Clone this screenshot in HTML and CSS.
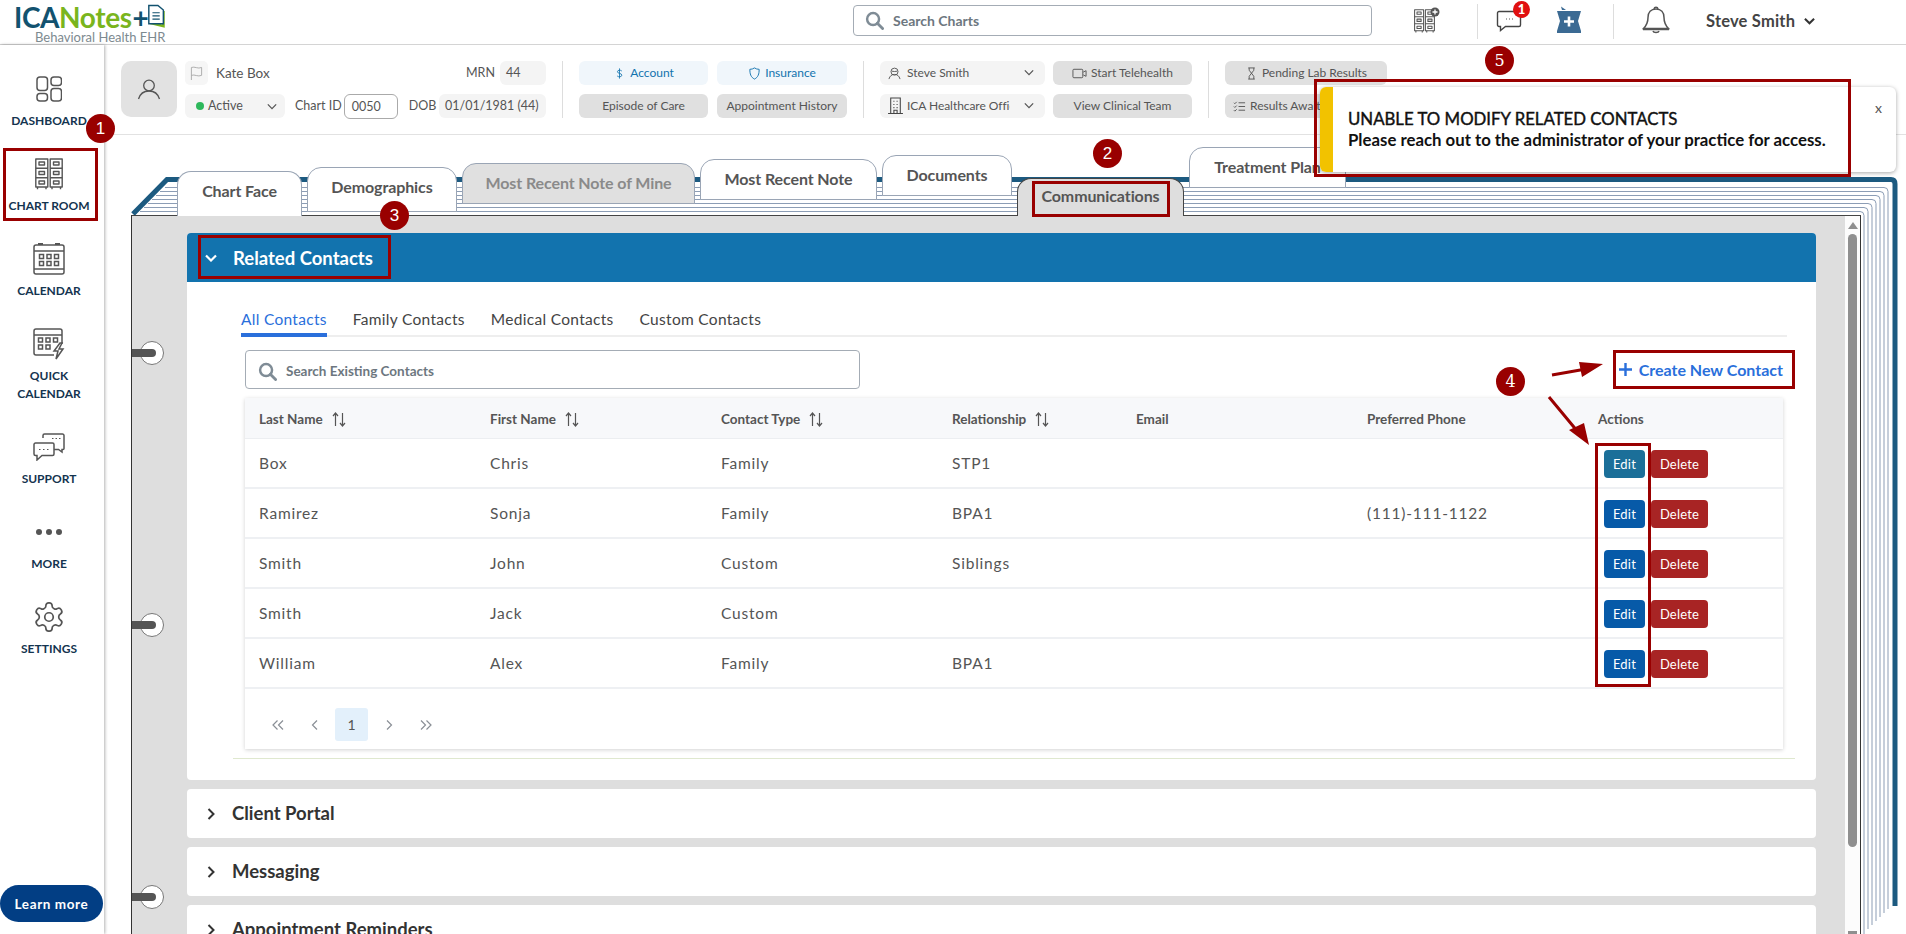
FILE: index.html
```html
<!DOCTYPE html>
<html lang="en">
<head>
<meta charset="utf-8">
<title>ICANotes - Related Contacts</title>
<link rel="stylesheet" href="styles.css">
</head>
<body>
<svg class="defs" width="0" height="0" aria-hidden="true">
  <symbol id="i-cabinets" viewBox="0 0 28 32">
    <g fill="none" stroke="currentColor" stroke-width="1.400" stroke-linejoin="round">
      <path d="M.8 1h12v28h-12zM15.200 1h12v28h-12z"/>
      <path d="M.8 10.300h12M.8 19.700h12M15.200 10.300h12M15.200 19.700h12M2.500 29v2.200M11 29v2.200M17 29v2.200M25.500 29v2.200"/>
      <path d="M4 4h5.500v3H4zM18.500 4H24v3h-5.500zM4 13.500h5.500v3H4zM18.500 13.500H24v3h-5.500zM4 23h5.500v3H4zM18.500 23H24v3h-5.500z"/>
    </g>
  </symbol>
  <symbol id="i-search" viewBox="0 0 20 20">
    <circle cx="8.500" cy="8.500" r="6.300" fill="none" stroke="currentColor" stroke-width="2.600"/>
    <path d="M13 13l5.500 5.500" stroke="currentColor" stroke-width="3" stroke-linecap="round"/>
  </symbol>
  <symbol id="i-chev-down" viewBox="0 0 12 8">
    <path d="M1 1.500l5 5 5-5" fill="none" stroke="currentColor"/>
  </symbol>
  <symbol id="i-chev-right" viewBox="0 0 8 12">
    <path d="M1.500 1l5 5-5 5" fill="none" stroke="currentColor" stroke-width="2"/>
  </symbol>
  <symbol id="i-sort" viewBox="0 0 14 15">
    <path d="M3.500 14V1M1 4l2.500-3L6 4M10.500 1v13M8 11l2.500 3 2.500-3" fill="none" stroke="currentColor" stroke-width="1.200"/>
  </symbol>
  <symbol id="i-first" viewBox="0 0 12 12"><path d="M5.500 1.500L1 6l4.500 4.500M11 1.500L6.500 6l4.500 4.500" fill="none" stroke="currentColor" stroke-width="1.200"/></symbol>
  <symbol id="i-prev" viewBox="0 0 12 12"><path d="M8 1.500L3.500 6 8 10.500" fill="none" stroke="currentColor" stroke-width="1.200"/></symbol>
  <symbol id="i-next" viewBox="0 0 12 12"><path d="M4 1.500L8.500 6 4 10.500" fill="none" stroke="currentColor" stroke-width="1.200"/></symbol>
  <symbol id="i-last" viewBox="0 0 12 12"><path d="M1 1.500L5.500 6 1 10.500M6.500 1.500L11 6l-4.500 4.500" fill="none" stroke="currentColor" stroke-width="1.200"/></symbol>
</svg>

<div class="app">
  <header class="topbar">
    <div class="logo">
      <div class="logo-mark"><span class="logo-ica">ICA</span><span class="logo-notes">Notes</span><span class="logo-plus">+</span>
        <svg class="logo-doc" viewBox="0 0 22 26"><path d="M3 21l15 3.500V8" fill="none" stroke="#7ab51d" stroke-width="3"/><path d="M2 2h10l6 5v15H2z" fill="#fff" stroke="#12526f" stroke-width="1.600"/><path d="M6 10h8M6 13.500h8M6 17h8" stroke="#12526f" stroke-width="1.300"/></svg>
      </div>
      <div class="logo-sub">Behavioral Health EHR</div>
    </div>
    <div class="chart-search">
      <svg class="search-icon"><use href="#i-search"/></svg>
      <span>Search Charts</span>
    </div>
    <svg class="top-cabinets" viewBox="0 0 26 26">
      <use href="#i-cabinets" x="0" y="2" width="21" height="24"/>
      <circle cx="21" cy="5" r="4.500" fill="#555"/><path d="M21 2.500v5M18.500 5h5" stroke="#fff" stroke-width="1.300"/>
    </svg>
    <span class="top-divider first"></span>
    <div class="message-icon">
      <svg viewBox="0 0 26 22"><path d="M3 1.500h20a1.500 1.500 0 0 1 1.500 1.500v12a1.500 1.500 0 0 1-1.500 1.500H9.500L4.500 20.500v-4H3A1.500 1.500 0 0 1 1.500 15V3A1.500 1.500 0 0 1 3 1.500z" fill="#fff" stroke="#444" stroke-width="1.400"/><path d="M10 9h1M13 9h1M16 9h1" stroke="#555" stroke-width="1"/></svg>
      <span class="badge">1</span>
    </div>
    <svg class="mortar-icon" viewBox="0 0 26 28"><path d="M5 0.500l5 3.500h-4z" fill="#3b6a93"/><path d="M1 5h24l-3 10 3 10v2H1v-2l3-10z" fill="#3b6a93"/><path d="M13 10.500v10M8 15.500h10" stroke="#fff" stroke-width="2.600"/></svg>
    <span class="top-divider second"></span>
    <svg class="bell-icon" viewBox="0 0 28 28"><path d="M14 3c-5 0-8 3.500-8 8.500 0 5-1.500 8-4.500 11h25c-3-3-4.500-6-4.500-11C22 6.500 19 3 14 3z" fill="none" stroke="#555" stroke-width="1.500"/><path d="M11 25c.5 2 5.500 2 6 0M12 3c.5-2.500 3.500-2.500 4 0" fill="none" stroke="#555" stroke-width="1.500"/><path d="M1 23.500h26" stroke="#555" stroke-width="1.500"/></svg>
    <span class="user-name">Steve Smith</span>
    <svg class="user-chev"><use href="#i-chev-down"/></svg>
  </header>

  <div class="workspace">
    <nav class="sidebar">
      <a class="nav-item">
        <span class="nav-icon"><svg class="ico-dash" viewBox="0 0 26 26"><g fill="none" stroke="#555" stroke-width="1.500"><rect x="1" y="1" width="10.500" height="13.500" rx="3"/><rect x="15" y="1" width="10.500" height="8.500" rx="3"/><rect x="1" y="17.500" width="10.500" height="7.500" rx="3"/><rect x="15" y="12.500" width="10.500" height="12.500" rx="3"/></g></svg></span>
        <span class="nav-label">DASHBOARD</span>
      </a>
      <a class="nav-item">
        <span class="nav-icon"><svg class="ico-chart"><use href="#i-cabinets"/></svg></span>
        <span class="nav-label">CHART ROOM</span>
      </a>
      <a class="nav-item">
        <span class="nav-icon"><svg class="ico-cal" viewBox="0 0 32 32"><g fill="none" stroke="#555" stroke-width="1.500"><rect x="1" y="2" width="30" height="29" rx="2"/><path d="M1 8h30M1 26h30"/><path d="M5 1h5M22 1h5" stroke-width="2"/><rect x="6.500" y="11.500" width="4" height="4"/><rect x="14" y="11.500" width="4" height="4"/><rect x="21.500" y="11.500" width="4" height="4"/><rect x="6.500" y="18.500" width="4" height="4"/><rect x="14" y="18.500" width="4" height="4"/><rect x="21.500" y="18.500" width="4" height="4"/></g></svg></span>
        <span class="nav-label">CALENDAR</span>
      </a>
      <a class="nav-item tall">
        <span class="nav-icon"><svg class="ico-quick" viewBox="0 0 32 32"><g fill="none" stroke="#555" stroke-width="1.500"><path d="M21 27H3a2 2 0 0 1-2-2V3a2 2 0 0 1 2-2h24a2 2 0 0 1 2 2v13"/><path d="M1 7h28"/><rect x="5.500" y="10" width="4" height="4"/><rect x="13" y="10" width="4" height="4"/><rect x="20.500" y="10" width="4" height="4"/><rect x="5.500" y="17" width="4" height="4"/><rect x="13" y="17" width="4" height="4"/><path d="M27 15l-6 8h4l-2 8 7-10h-4l3-6z" fill="#fff"/></g></svg></span>
        <span class="nav-label">QUICK<br>CALENDAR</span>
      </a>
      <a class="nav-item">
        <span class="nav-icon"><svg class="ico-support" viewBox="0 0 32 28"><g fill="none" stroke="#555" stroke-width="1.500"><path d="M10 5V2.500A1.500 1.500 0 0 1 11.500 1h18A1.500 1.500 0 0 1 31 2.500v13a1 1 0 0 1-1 1l-1 0v2.500l-3.500-2.500H21"/><path d="M2.500 10H19.500A1.500 1.500 0 0 1 21 11.500V21a1.500 1.500 0 0 1-1.500 1.500H9L4 27v-4.500H2.500A1.500 1.500 0 0 1 1 21V11.500A1.500 1.500 0 0 1 2.500 10z" fill="#fff"/><path d="M6 16.500h1.500M10 16.500h1.500M14 16.500h1.500M19 5.500h1.500M22.500 5.500h1.500M26 5.500h1.500" stroke-width="1"/></g></svg></span>
        <span class="nav-label">SUPPORT</span>
      </a>
      <a class="nav-item">
        <span class="nav-icon"><span class="dots"><i></i><i></i><i></i></span></span>
        <span class="nav-label">MORE</span>
      </a>
      <a class="nav-item">
        <span class="nav-icon"><svg class="ico-gear" viewBox="0 0 24 24"><path fill="none" stroke="#555" stroke-width="1.200" d="M12.220 2h-.44a2 2 0 0 0-2 2v.18a2 2 0 0 1-1 1.730l-.43.25a2 2 0 0 1-2 0l-.15-.08a2 2 0 0 0-2.730.73l-.22.38a2 2 0 0 0 .73 2.730l.15.1a2 2 0 0 1 1 1.720v.51a2 2 0 0 1-1 1.740l-.15.09a2 2 0 0 0-.73 2.730l.22.38a2 2 0 0 0 2.730.73l.15-.08a2 2 0 0 1 2 0l.43.25a2 2 0 0 1 1 1.730V20a2 2 0 0 0 2 2h.44a2 2 0 0 0 2-2v-.18a2 2 0 0 1 1-1.730l.43-.25a2 2 0 0 1 2 0l.15.08a2 2 0 0 0 2.730-.73l.22-.39a2 2 0 0 0-.73-2.730l-.15-.08a2 2 0 0 1-1-1.740v-.5a2 2 0 0 1 1-1.740l.15-.09a2 2 0 0 0 .73-2.730l-.22-.38a2 2 0 0 0-2.730-.73l-.15.08a2 2 0 0 1-2 0l-.43-.25a2 2 0 0 1-1-1.730V4a2 2 0 0 0-2-2z"/><circle cx="12" cy="12" r="3" fill="none" stroke="#555" stroke-width="1.200"/></svg></span>
        <span class="nav-label">SETTINGS</span>
      </a>
      <button class="learn-more">Learn more</button>
    </nav>

    <main class="main">
      <section class="patient">
        <div class="avatar"><svg viewBox="0 0 24 24"><circle cx="12" cy="8.500" r="5.300" fill="none" stroke="#555" stroke-width="1.300"/><path d="M1.500 22c1.500-5 5-8 10.500-8s9 3 10.500 8" fill="none" stroke="#555" stroke-width="1.300"/></svg></div>
        <div class="identity">
          <div class="id-row">
            <div class="id-left">
              <span class="flag-box"><svg viewBox="0 0 14 16"><path d="M1.500 15V1.500c3.500-1.500 7 2 11 0V10c-4 2-7.500-1.500-11 0" fill="none" stroke="#aaa" stroke-width="1"/></svg></span>
              <span class="patient-name">Kate Box</span>
            </div>
            <div class="id-right">
              <span class="id-caption">MRN</span>
              <span class="pill-value mrn">44</span>
            </div>
          </div>
          <div class="id-row">
            <span class="status-select"><i class="status-dot"></i><span class="status-text">Active</span><svg class="chev-small"><use href="#i-chev-down"/></svg></span>
            <span class="id-caption chart-cap">Chart ID</span>
            <span class="chart-id">0050</span>
            <span class="id-caption dob-cap">DOB</span>
            <span class="pill-value dob">01/01/1981 (44)</span>
          </div>
        </div>
        <span class="pat-divider"></span>
        <div class="btn-grid account-grid">
          <a class="pbtn light"><svg class="pico" viewBox="0 0 12 14"><path d="M8.500 4.300C6.800 2.800 3.700 3.300 3.800 5.200 3.900 7.400 8.500 6.400 8.500 8.800c0 1.900-3.300 2.300-5 .9M6 1.500v11" fill="none" stroke="#1273ae" stroke-width=".9"/></svg>Account</a>
          <a class="pbtn light"><svg class="pico" viewBox="0 0 12 14"><path d="M1 2.500c2 0 3.500-.5 5-1.500 1.500 1 3 1.500 5 1.500 0 5-1 8.500-5 10.500C2 11 1 7.500 1 2.500z" fill="none" stroke="#1273ae" stroke-width="1"/></svg>Insurance</a>
          <a class="pbtn">Episode of Care</a>
          <a class="pbtn">Appointment History</a>
        </div>
        <span class="pat-divider"></span>
        <div class="btn-grid staff-grid">
          <span class="staff-select"><svg class="pico" viewBox="0 0 14 14"><circle cx="7" cy="5" r="3.800" fill="none" stroke="#555" stroke-width="1"/><path d="M1 13c1-3.500 3-5 6-5s5 1.500 6 5M4 4.500c2 .5 4 .5 6 0" fill="none" stroke="#555" stroke-width="1"/></svg><span class="staff-text">Steve Smith</span><svg class="chev-small"><use href="#i-chev-down"/></svg></span>
          <a class="pbtn"><svg class="pico video" viewBox="0 0 16 12"><rect x="1" y="1.500" width="10.500" height="9" rx="1" fill="none" stroke="#555" stroke-width="1"/><path d="M12 4.500l3-1.500v6l-3-1.500" fill="none" stroke="#555" stroke-width="1"/></svg>Start Telehealth</a>
          <span class="staff-select"><svg class="pico building" viewBox="0 0 14 16"><path d="M2.500 15V1h9v14M0 15.500h14M5 4h1M8 4h1M5 7h1M8 7h1M5 10h1M8 10h1M5.500 15v-2.500h3V15" fill="none" stroke="#444" stroke-width="1"/></svg><span class="staff-text tight">ICA Healthcare Office</span><svg class="chev-small"><use href="#i-chev-down"/></svg></span>
          <a class="pbtn">View Clinical Team</a>
        </div>
        <span class="pat-divider"></span>
        <div class="btn-grid results-grid">
          <a class="pbtn"><svg class="pico" viewBox="0 0 10 14"><path d="M1.500 1h7M1.500 13h7M2.500 1v2.500L7.500 10v3M7.500 1v2.500L2.500 10v3" fill="none" stroke="#555" stroke-width="1"/></svg>Pending Lab Results</a>
          <a class="pbtn left"><svg class="pico" viewBox="0 0 14 12"><path d="M1 2l1 1 2-2M1 6l1 1 2-2M1 10l1 1 2-2M6 2h7M6 6h7M6 10h7" fill="none" stroke="#555" stroke-width="1"/></svg>Results Awaiting</a>
        </div>
      </section>

      <section class="book">
        <svg class="book-pages" viewBox="131 135 1775 799" aria-hidden="true">
          <g fill="none" stroke="#8c9db5" stroke-width="1">
            <path d="M165 187.500H1884q4 0 4 4V909"/>
            <path d="M160 191.500H1880q4 0 4 4V913"/>
            <path d="M156 195.500H1876q4 0 4 4V917"/>
            <path d="M152 199.500H1872q4 0 4 4V921"/>
            <path d="M148 203.500H1868q4 0 4 4V925"/>
            <path d="M144 207.500H1864q4 0 4 4V929"/>
            <path d="M140 211.500H1860q4 0 4 4V934"/>
          </g>
          <path d="M133 214L167 179.500H1891Q1895 179.500 1895 184V906" fill="none" stroke="#1c5a80" stroke-width="5"/>
        </svg>
        <div class="tabs">
          <a class="tab t-face">Chart Face</a>
          <a class="tab t-demo">Demographics</a>
          <a class="tab t-mine">Most Recent Note of Mine</a>
          <a class="tab t-recent">Most Recent Note</a>
          <a class="tab t-docs">Documents</a>
          <a class="tab t-comm">Communications</a>
          <a class="tab t-plan">Treatment Plan</a>
        </div>
        <div class="frame">
          <div class="frame-content">
            <article class="panel open">
              <header class="panel-head"><svg class="head-chev"><use href="#i-chev-down"/></svg><h2>Related Contacts</h2></header>
              <div class="panel-body">
                <div class="subtabs">
                  <a class="subtab active">All Contacts</a>
                  <a class="subtab">Family Contacts</a>
                  <a class="subtab">Medical Contacts</a>
                  <a class="subtab">Custom Contacts</a>
                </div>
                <div class="toolbar">
                  <div class="contact-search"><svg class="search-icon"><use href="#i-search"/></svg><span>Search Existing Contacts</span></div>
                  <a class="create-link"><svg class="plus" viewBox="0 0 14 14"><path d="M7 0v14M0 7h14" stroke="currentColor" stroke-width="2.600"/></svg>Create New Contact</a>
                </div>
                <div class="table-card">
                  <table>
                    <thead>
                      <tr>
                        <th>Last Name<svg class="sort"><use href="#i-sort"/></svg></th>
                        <th>First Name<svg class="sort"><use href="#i-sort"/></svg></th>
                        <th>Contact Type<svg class="sort"><use href="#i-sort"/></svg></th>
                        <th>Relationship<svg class="sort"><use href="#i-sort"/></svg></th>
                        <th>Email</th>
                        <th>Preferred Phone</th>
                        <th>Actions</th>
                      </tr>
                    </thead>
                    <tbody>
                      <tr><td>Box</td><td>Chris</td><td>Family</td><td>STP1</td><td></td><td></td><td><div class="actions"><a class="btn edit hover">Edit</a><a class="btn del">Delete</a></div></td></tr>
                      <tr><td>Ramirez</td><td>Sonja</td><td>Family</td><td>BPA1</td><td></td><td>(111)-111-1122</td><td><div class="actions"><a class="btn edit">Edit</a><a class="btn del">Delete</a></div></td></tr>
                      <tr><td>Smith</td><td>John</td><td>Custom</td><td>Siblings</td><td></td><td></td><td><div class="actions"><a class="btn edit">Edit</a><a class="btn del">Delete</a></div></td></tr>
                      <tr><td>Smith</td><td>Jack</td><td>Custom</td><td></td><td></td><td></td><td><div class="actions"><a class="btn edit">Edit</a><a class="btn del">Delete</a></div></td></tr>
                      <tr><td>William</td><td>Alex</td><td>Family</td><td>BPA1</td><td></td><td></td><td><div class="actions"><a class="btn edit">Edit</a><a class="btn del">Delete</a></div></td></tr>
                    </tbody>
                  </table>
                  <div class="pager">
                    <span class="pg"><svg><use href="#i-first"/></svg></span><span class="pg"><svg><use href="#i-prev"/></svg></span><span class="pg current">1</span><span class="pg"><svg><use href="#i-next"/></svg></span><span class="pg"><svg><use href="#i-last"/></svg></span>
                  </div>
                </div>
                <div class="rule"></div>
              </div>
            </article>
            <article class="panel closed"><svg class="closed-chev"><use href="#i-chev-right"/></svg><h3>Client Portal</h3></article>
            <article class="panel closed"><svg class="closed-chev"><use href="#i-chev-right"/></svg><h3>Messaging</h3></article>
            <article class="panel closed"><svg class="closed-chev"><use href="#i-chev-right"/></svg><h3>Appointment Reminders</h3></article>
          </div>
          <div class="gutter"><i class="sb-up"></i><i class="sb-thumb"></i><i class="sb-down"></i></div>
          <span class="ring r1"></span><span class="ring r2"></span><span class="ring r3"></span>
        </div>
      </section>
    </main>
  </div>

  <aside class="toast">
    <i class="toast-bar"></i>
    <div class="toast-text">
      <div class="toast-title">UNABLE TO MODIFY RELATED CONTACTS</div>
      <div class="toast-msg">Please reach out to the administrator of your practice for access.</div>
    </div>
    <span class="toast-close">x</span>
  </aside>

  <span class="mark box-chart"></span>
  <span class="mark box-comm"></span>
  <span class="mark box-related"></span>
  <span class="mark box-create"></span>
  <span class="mark box-edit"></span>
  <span class="mark box-toast"></span>
  <span class="num n1">1</span>
  <span class="num n2">2</span>
  <span class="num n3">3</span>
  <span class="num serif n4">4</span>
  <span class="num serif n5">5</span>
  <svg class="arrows" viewBox="0 0 1906 934" aria-hidden="true">
    <path d="M1552 375L1586 369M1549 397L1578 432" stroke="#990000" stroke-width="3"/>
    <path d="M1603 364L1579 362L1582 377zM1589 445L1569 430L1584 423z" fill="#990000"/>
  </svg>
</div>
</body>
</html>
```

FILE: styles.css
```css
* { box-sizing: border-box; }
html, body { margin: 0; padding: 0; height: 100%; overflow: hidden; background: #fff; }
body { font-family: Lato, "Liberation Sans", sans-serif; color: #444; font-size: 13px; }
.defs { position: absolute; }
.app { position: relative; width: 1906px; height: 934px; display: flex; flex-direction: column; overflow: hidden; }

/* top bar */
.topbar { height: 45px; flex: none; border-bottom: 1px solid #d4d4d4; display: flex; align-items: center; }
.logo { width: 853px; height: 44px; padding-left: 14px; flex: none; display: flex; flex-direction: column; }
.logo-mark { display: flex; align-items: center; height: 34px; font-size: 28px; font-weight: 700; letter-spacing: -.4px; line-height: 34px; }
.logo-ica { color: #12526f; }
.logo-notes { color: #7ab51d; }
.logo-plus { color: #12526f; margin-left: 1px; }
.logo-doc { width: 20px; height: 25px; margin-left: -1px; margin-top: -3px; }
.logo-sub { margin: -4px 0 0 21px; font-size: 13px; line-height: 14px; color: #7d8a90; white-space: nowrap; }
.chart-search { width: 519px; height: 31px; border: 1px solid #a4acb5; border-radius: 4px; display: flex; align-items: center; padding-left: 11px; font-size: 14px; font-weight: 700; color: #6d7780; flex: none; margin-top: -3px; }
.search-icon { width: 19px; height: 19px; color: #7f8c96; margin-right: 9px; flex: none; }
.top-cabinets { width: 26px; height: 26px; margin-left: 42px; color: #555; flex: none; margin-top: -5px; }
.top-divider { width: 1px; height: 35px; background: #ddd; flex: none; margin-top: -2px; }
.top-divider.first { margin-left: 37px; }
.top-divider.second { margin-left: 31px; }
.message-icon { position: relative; width: 26px; height: 22px; margin-left: 18px; flex: none; margin-top: -3px; }
.message-icon svg { width: 26px; height: 22px; display: block; }
.badge { position: absolute; left: 17px; top: -9px; width: 17px; height: 17px; border-radius: 50%; background: #e01010; color: #fff; font-size: 13px; font-weight: 900; text-align: center; line-height: 17px; }
.mortar-icon { width: 26px; height: 28px; margin-left: 34px; flex: none; margin-top: -4px; }
.bell-icon { width: 28px; height: 28px; margin-left: 28px; flex: none; margin-top: -4px; }
.user-name { margin-left: 36px; font-size: 16.500px; font-weight: 700; letter-spacing: .2px; color: #444; white-space: nowrap; margin-top: -3px; }
.user-chev { width: 11px; height: 8px; margin-left: 9px; color: #333; margin-top: -3px; stroke-width: 2.200; }

/* layout */
.workspace { flex: 1; display: flex; min-height: 0; }
.sidebar { width: 104px; flex: none; padding-top: 24px; display: flex; flex-direction: column; align-items: stretch; gap: 24px; box-shadow: 1px 0 3px rgba(0,0,0,.3); background: #fff; position: relative; z-index: 1; }
.nav-item { display: flex; flex-direction: column; align-items: center; text-align: center; width: 98px; }
.nav-icon { height: 40px; margin-bottom: 3px; display: flex; align-items: center; justify-content: center; }
.nav-label { font-size: 12px; line-height: 18px; font-weight: 700; color: #14344f; }
.ico-dash { width: 26px; height: 26px; }
.ico-chart { width: 28px; height: 32px; color: #555; }
.ico-cal { width: 32px; height: 32px; }
.ico-quick { width: 32px; height: 32px; }
.ico-support { width: 32px; height: 28px; }
.ico-gear { width: 34px; height: 34px; }
.dots { display: flex; gap: 4px; }
.dots i { width: 6px; height: 6px; border-radius: 50%; background: #555; }
.learn-more { margin-top: auto; margin-bottom: 12px; width: 103px; height: 37px; border: 0; border-radius: 19px; background: #023e84; color: #fff; font: 700 13.500px Lato, sans-serif; letter-spacing: .6px; }
.main { flex: 1; min-width: 0; display: flex; flex-direction: column; }

/* patient bar */
.patient { height: 90px; flex: none; border-bottom: 1px solid #e2e2e2; padding: 16px 0 0 17px; display: flex; align-items: flex-start; font-size: 12px; color: #555; }
.avatar { width: 56px; height: 56px; border-radius: 10px; background: #e2e2e2; display: flex; align-items: center; justify-content: center; flex: none; }
.avatar svg { width: 24px; height: 24px; }
.identity { width: 361px; margin-left: 8px; flex: none; display: flex; flex-direction: column; gap: 9px; }
.id-row { display: flex; align-items: center; height: 24px; justify-content: space-between; }
.id-row:last-child { justify-content: flex-start; }
.id-left, .id-right { display: flex; align-items: center; }
.flag-box { width: 23px; height: 24px; border-radius: 5px; background: #f6f6f6; display: flex; align-items: center; justify-content: center; }
.flag-box svg { width: 13px; height: 15px; }
.patient-name { margin-left: 8px; font-size: 13.500px; padding-bottom: 1px; }
.id-caption { font-size: 12.500px; white-space: nowrap; padding-bottom: 2px; }
.chart-cap { margin-left: 10px; }
.dob-cap { margin-left: 11px; }
.pill-value { height: 24px; background: #f4f4f4; border-radius: 6px; display: flex; align-items: center; font-size: 12.500px; padding: 0 0 1px 6px; }
.mrn { width: 46px; margin-left: 5px; }
.dob { width: 107px; margin-left: auto; white-space: nowrap; }
.status-select { width: 100px; height: 24px; background: #f4f4f4; border-radius: 6px; display: flex; align-items: center; padding-left: 11px; }
.status-dot { width: 8px; height: 8px; border-radius: 50%; background: #2eb85c; margin-right: 4px; }
.status-text { flex: 1; font-size: 12.500px; padding-bottom: 1px; }
.chev-small { width: 10px; height: 7px; margin-right: 8px; color: #555; flex: none; stroke-width: 1.500; }
.chart-id { width: 54px; height: 25px; margin-left: 2px; border: 1px solid #aaa; border-radius: 6px; display: flex; align-items: center; padding-left: 7px; font-size: 12.500px; }
.pat-divider { width: 1px; height: 57px; background: #ddd; flex: none; margin: 0 16px; }
.btn-grid { display: grid; grid-template-rows: 24px 24px; gap: 9px; flex: none; }
.account-grid { grid-template-columns: 129px 130px; }
.staff-grid { grid-template-columns: 165px 139px; column-gap: 8px; }
.results-grid { grid-template-columns: 162px; }
.pbtn { background: #e0e0e0; border-radius: 6px; display: flex; align-items: center; justify-content: center; white-space: nowrap; overflow: hidden; font-size: 12px; padding-bottom: 2px; }
.pbtn.light { background: #f0f6fb; color: #1273ae; }
.pbtn.left { justify-content: flex-start; padding-left: 8px; }
.pico { width: 13px; height: 13px; margin-right: 4px; flex: none; margin-top: 2px; }
.pico.video { width: 15px; }
.pico.building { width: 15px; height: 17px; margin-top: 0; }
.staff-select { background: #f4f4f4; border-radius: 6px; display: flex; align-items: center; padding: 0 0 1px 8px; }
.staff-text { width: 103px; margin-left: 2px; overflow: hidden; white-space: nowrap; margin-right: 14px; font-size: 12px; }
.staff-text.tight { margin-left: 0; letter-spacing: -.05px; }

/* book */
.book { flex: 1; min-height: 0; position: relative; margin-left: 27px; display: flex; flex-direction: column; }
.book-pages { position: absolute; left: 0; top: 0; width: 1775px; height: 799px; }
.tabs { position: relative; z-index: 2; height: 80px; flex: none; padding-left: 46px; display: flex; align-items: flex-start; gap: 5px; }
.tab { flex: none; background: #fff; border: 1px solid #9aa5b5; border-radius: 14px 14px 0 0; text-align: center; padding-top: 7px; line-height: 24px; font-size: 16px; letter-spacing: -.1px; font-weight: 700; color: #555; white-space: nowrap; }
.t-face { width: 125px; margin-top: 36px; height: 45px; border-bottom: 0; }
.t-demo { width: 150px; margin-top: 32px; height: 45px; }
.t-mine { width: 233px; margin-top: 28px; height: 41px; background: #e0e0e0; color: #8a8a8a; }
.t-recent { width: 177px; margin-top: 24px; height: 41px; }
.t-docs { width: 130px; margin-top: 20px; height: 41px; }
.t-comm { width: 167px; margin-top: 43px; height: 38px; background: #dedede; border-color: #444; border-bottom: 0; padding-top: 5px; }
.t-plan { width: 157px; margin-top: 12px; height: 41px; }
.frame { position: relative; z-index: 1; flex: 1; min-height: 0; width: 1730px; border: 1px solid #333; border-bottom: 0; border-top-color: #444; display: flex; overflow: hidden; background: #fff; }
.frame-content { width: 1713px; flex: none; background: #dedede; padding: 17px 29px 0 55px; overflow: hidden; }
.gutter { flex: 1; background: #fcfcfc; display: flex; flex-direction: column; align-items: center; padding-top: 6px; }
.sb-up { width: 0; height: 0; border-left: 5px solid transparent; border-right: 5px solid transparent; border-bottom: 7px solid #8f8f8f; }
.sb-thumb { width: 9px; height: 613px; border-radius: 5px; background: #8f8f8f; margin-top: 5px; }
.sb-down { width: 9px; height: 3px; background: #8f8f8f; margin-top: 84px; }
.ring { position: absolute; left: 8px; width: 24px; height: 24px; border-radius: 50%; background: #fff; border: 1px solid #777; z-index: 1; }
.ring::before { content: ""; position: absolute; left: -9px; top: 7px; width: 24px; height: 8px; border-radius: 0 4px 4px 0; background: #555; }
.r1 { top: 125px; }
.r2 { top: 397px; }
.r3 { top: 669px; }

/* panels */
.panel { background: #fff; border-radius: 4px; }
.panel.open { height: 547px; overflow: hidden; }
.panel-head { height: 49px; background: #1273ae; display: flex; align-items: center; padding-left: 18px; color: #fff; }
.head-chev { width: 12px; height: 8px; color: #fff; stroke-width: 2.200; }
.panel-head h2 { margin: 0 0 0 16px; font-size: 18.500px; font-weight: 700; color: #fff; }
.panel-body { padding: 24px 29px 0 54px; }
.subtabs { height: 31px; border-bottom: 2px solid #eee; display: flex; gap: 26px; }
.subtab { height: 31px; font-size: 15.500px; line-height: 27px; color: #444; letter-spacing: .3px; white-space: nowrap; }
.subtab.active { color: #2a6fdb; border-bottom: 4px solid #2a6fdb; }
.toolbar { display: flex; justify-content: space-between; align-items: center; margin: 13px 4px 9px; height: 39px; }
.contact-search { width: 615px; height: 39px; border: 1px solid #a4acb5; border-radius: 4px; display: flex; align-items: center; padding: 0 0 0 12px; font-size: 13.500px; font-weight: 700; color: #6d7780; }
.contact-search span { padding-top: 3px; }
.contact-search .search-icon { margin-top: 4px; }
.create-link { display: flex; align-items: center; font-size: 16px; font-weight: 700; color: #2a6fdb; white-space: nowrap; }
.plus { width: 13px; height: 13px; margin-right: 7px; }
.table-card { margin: 0 4px; box-shadow: 0 1px 4px rgba(0,0,0,.18); background: #fff; height: 351px; }
table { width: 100%; border-collapse: collapse; table-layout: fixed; }
th { height: 40px; background: #f7f8fa; border-bottom: 1px solid #eceef1; text-align: left; padding: 2px 0 0 14px; font-size: 13.500px; font-weight: 700; color: #555; white-space: nowrap; }
th:nth-child(1), th:nth-child(2), th:nth-child(3), th:nth-child(5), th:nth-child(6) { width: 231px; }
th:nth-child(4) { width: 184px; }
td { height: 50px; border-bottom: 2px solid #eef0f3; padding: 0 0 0 14px; font-size: 15.500px; letter-spacing: .8px; color: #555; white-space: nowrap; }
.sort { width: 14px; height: 15px; margin-left: 9px; vertical-align: -3px; color: #555; }
.actions { display: flex; gap: 6px; margin: 2px 0 0 6px; }
.btn { height: 28px; border-radius: 4px; color: #fff; display: flex; align-items: center; justify-content: center; font-size: 13px; letter-spacing: .2px; }
.edit { width: 41px; background: #075aa8; }
.edit.hover { background: #1b6f99; }
.del { width: 57px; background: #a82424; }
.pager { display: flex; align-items: center; padding: 19px 0 0 14px; gap: 0; }
.pg { width: 37px; height: 33px; display: flex; align-items: center; justify-content: center; color: #8a8f96; }
.pg svg { width: 12px; height: 12px; }
.pg.current { width: 33px; margin: 0 2px; background: #e3f0fb; border-radius: 3px; font-size: 14px; color: #555; }
.rule { height: 1px; background: #dfe8cf; margin: 9px -8px 0 -8px; }
.panel.closed { height: 49px; margin-top: 9px; display: flex; align-items: center; padding: 0 0 2px 20px; }
.closed-chev { width: 8px; height: 12px; color: #333; margin-top: 3px; }
.panel.closed h3 { margin: 0 0 0 17px; font-size: 18.500px; font-weight: 700; color: #333; }

/* toast */
.toast { position: absolute; left: 1320px; top: 87px; width: 576px; height: 85px; background: #fff; border-radius: 6px; box-shadow: 0 1px 4px rgba(0,0,0,.35); display: flex; z-index: 5; overflow: hidden; }
.toast-bar { width: 13px; background: #f2c200; flex: none; }
.toast-text { margin-left: 15px; padding-top: 21px; font-size: 16.800px; line-height: 21px; color: #111; }
.toast-title { font-weight: 400; -webkit-text-stroke: .4px #111; white-space: nowrap; }
.toast-msg { font-weight: 700; white-space: nowrap; }
.toast-close { position: absolute; right: 14px; top: 12px; font-size: 14px; color: #555; }

/* annotations */
.mark { position: absolute; border: 3px solid #990000; z-index: 6; }
.box-chart { left: 3px; top: 148px; width: 95px; height: 73px; }
.box-comm { left: 1032px; top: 181px; width: 138px; height: 36px; }
.box-related { left: 198px; top: 235px; width: 193px; height: 44px; }
.box-create { left: 1613px; top: 350px; width: 182px; height: 39px; }
.box-edit { left: 1595px; top: 443px; width: 56px; height: 244px; }
.box-toast { left: 1314px; top: 79px; width: 537px; height: 98px; }
.num { position: absolute; width: 29px; height: 29px; border-radius: 50%; background: #990000; color: #fff; text-align: center; line-height: 29px; font-size: 17px; z-index: 6; font-family: "Liberation Sans", sans-serif; }
.num.serif { font-family: "DejaVu Serif", serif; font-size: 16px; }
.n1 { left: 86px; top: 114px; }
.n2 { left: 1093px; top: 139px; }
.n3 { left: 380px; top: 201px; }
.n4 { left: 1496px; top: 367px; }
.n5 { left: 1485px; top: 46px; }
.arrows { position: absolute; left: 0; top: 0; width: 1906px; height: 934px; z-index: 6; pointer-events: none; }
```
